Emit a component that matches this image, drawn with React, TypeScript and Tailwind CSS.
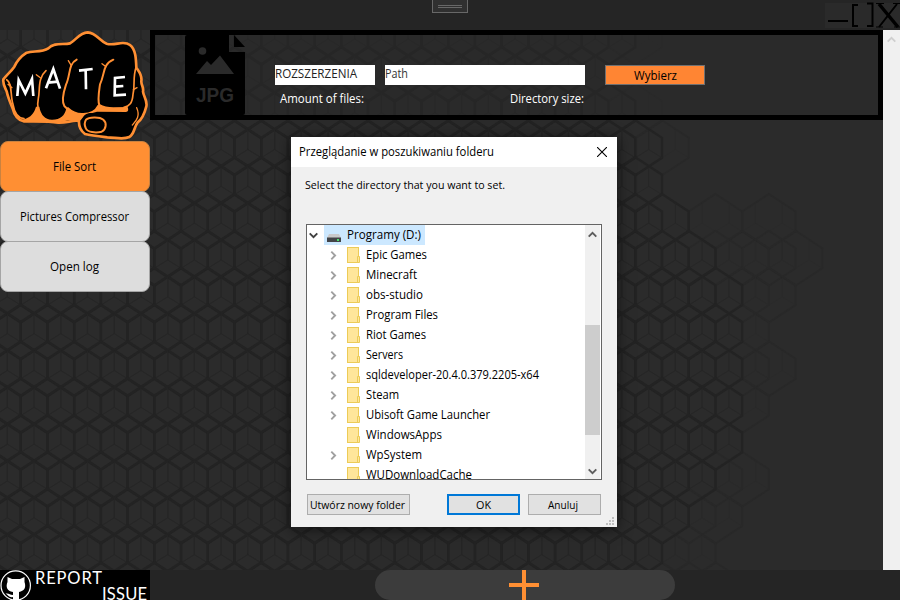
import type { ReactNode } from "react";

const CELL_W = 26.72;
const ROW_H = 36.83;
const FIRST_X = -6;
const FIRST_Y = 7.3;
// Right-hand limit of the honeycomb for each row, in pixels.
const ROW_ENDS = [662, 636, 662, 689, 662, 796, 823, 796, 769, 796, 769, 742, 769, 742, 716, 742];
// Cells from this x onwards are drawn in the lighter outline.
const FAINT_FROM = [620, 590, 620, 640, 655, 680, 700, 720, 720, 740, 740, 725, 700, 670, 650, 650];

function Honeycomb() {
  const faintCells: ReactNode[] = [];
  const cells: ReactNode[] = [];
  ROW_ENDS.forEach((end, r) => {
    const y = FIRST_Y + r * ROW_H;
    for (let x = FIRST_X; x + CELL_W <= end + 6; x += CELL_W) {
      if (r === 5 && (Math.abs(x - 743) < 8 || Math.abs(x - 689) < 8)) continue;
      const faint = x > FAINT_FROM[r];
      (faint ? faintCells : cells).push(
        <g key={r + "-" + x} transform={`translate(${x} ${y})`} stroke={faint ? "#282828" : "#232323"}>
          <path d="M0-27.5 26.7-10V10L0 27.5-26.7 10V-10Z" strokeWidth={faint ? 1.8 : 2.3} />
          <path d="M-13.4-18V1.7M13.4-18V1.7M-26.7 10-13.4 1.7 0 10 13.4 1.7 26.7 10" strokeWidth=".8" stroke={faint ? "#292929" : "#262626"} />
        </g>
      );
    }
  });
  return (
    <svg className="absolute inset-0" width="883" height="540" fill="none">
      {faintCells}
      {cells}
    </svg>
  );
}

function FistLogo() {
  return (
    <svg className="block h-[110px] w-[150px]" viewBox="0 15 450 330" strokeLinejoin="round" strokeLinecap="round">
      <path
        d="M10 163C20 150 32 141 43 125C52 105 66 92 80 83C100 77 125 83 145 70C163 51 190 60 210 55C230 44 238 23 263 22C290 24 297 47 320 56C345 64 370 44 390 60C407 73 408 100 409 128C417 140 427 150 424 168C423 180 432 187 429 200C431 215 443 228 439 244C435 260 430 280 413 292C402 306 403 329 388 336C370 345 345 337 322 337C295 334 275 332 255 327C242 317 236 303 237 288C220 284 200 294 175 293C140 288 105 290 71 289C50 283 43 270 39 253C30 232 23 215 20 199C14 186 8 177 10 163Z"
        fill="#000" stroke="#ff8f33" strokeWidth="8"
      />
      <path d="M60 284Q98 282 108 245L118 245Q125 283 155 284Q192 285 199 250L204 246Q225 266 250 264Q281 264 293 240L300 238Q315 247 340 247L383 246Q388 259 378 261L291 260 255 270 238 290 205 286 170 294Z" fill="#ff8f33" />
      <g fill="none" stroke="#ff8f33" strokeWidth="5">
        <path d="M20 164C38 175 30 210 39 238C44 268 55 279 72 281" />
        <path d="M138 137C112 160 121 193 115 220C112 232 113 245 115 256" />
        <path d="M230 104C204 117 212 151 198 179C191 200 184 228 193 243L202 252" strokeWidth="6" />
        <path d="M340 104C306 119 316 145 300 178C297 200 292 225 298 241" strokeWidth="6" />
        <path d="M409 124C397 160 406 180 399 208C397 235 388 243 372 247" />
        <path d="M109 149 121 158M205 107 214 122M306 116 318 125M411 188 400 194M410 248C422 275 407 288 397 300M24 178 36 188" strokeWidth="4" />
      </g>
      <path d="M247 283C255 258 283 263 300 270C318 276 324 299 314 317C303 329 272 328 258 318C246 310 244 294 247 283Z" fill="#000" />
      <path d="M258 284C266 276 298 274 310 284C321 293 319 313 305 320C287 325 262 322 257 309Q251 295 258 284Z" fill="#000" stroke="#ff8f33" strokeWidth="6" />
      <g fill="none" stroke="#fff" strokeWidth="8" strokeLinecap="butt" strokeLinejoin="miter">
        <path d="M52 213 56 165 76 205 96 162 100 213M138 190 160 132 180 191M144 173 174 170M237 137 278 132M257 136 258 193M375 156 345 159 344 211 378 209M345 185 370 183" />
      </g>
    </svg>
  );
}

function JpgIcon() {
  return (
    <svg className="h-20 w-[60px] shrink-0" viewBox="0 0 60 80">
      <path d="M2 0H44V17H60V78Q60 80 58 80H2Q0 80 0 78V2Q0 0 2 0Z" fill="#000" />
      <path d="M49 0V12H60Z" fill="#000" />
      <circle cx="17.5" cy="16" r="3.8" fill="#2a2a2a" />
      <path d="M11 39 22 26 26 30 35 20.5 49 39Z" fill="#2a2a2a" />
      <text x="30" y="67" textAnchor="middle" textLength="38" lengthAdjust="spacingAndGlyphs" fill="#2a2a2a" fontFamily="Liberation Sans" fontWeight="bold" fontSize="20">JPG</text>
    </svg>
  );
}

function Folder() {
  return (
    <svg className="h-4 w-[13px] shrink-0" viewBox="0 0 13 16">
      <rect x=".5" y=".5" width="11" height="15" fill="#ffe69a" stroke="#eccb57" />
      <path d="M10.5 9.5H12.5V15.5H10.5Z" fill="#ffe69a" stroke="#eccb57" />
    </svg>
  );
}

function Chevron({ className, color = "#5c5c5c" }: { className: string; color?: string }) {
  return (
    <svg className={"shrink-0 " + className} width="9" height="9" viewBox="0 0 9 9" fill="none" stroke={color} strokeWidth="1.9">
      <path d="M.7 2.3 4.5 6.1 8.3 2.3" />
    </svg>
  );
}

const folders = [
  { name: "Epic Games", open: true, w: 61 },
  { name: "Minecraft", open: true, w: 51 },
  { name: "obs-studio", open: true, w: 57 },
  { name: "Program Files", open: true, w: 72 },
  { name: "Riot Games", open: true, w: 60 },
  { name: "Servers", open: true, w: 37 },
  { name: "sqldeveloper-20.4.0.379.2205-x64", open: true, w: 173 },
  { name: "Steam", open: true, w: 33 },
  { name: "Ubisoft Game Launcher", open: true, w: 124 },
  { name: "WindowsApps", open: false, w: 76 },
  { name: "WpSystem", open: true, w: 56 },
  { name: "WUDownloadCache", open: false, w: 106 },
];

// A single line of interface text fitted to an exact advance width.
function Label({ children, w, color = "#000", size = 12 }: { children: string; w: number; color?: string; size?: number }) {
  return (
    <svg className="block h-4 shrink-0 overflow-visible" width={w} height="16">
      <text x="0" y="12.4" textLength={w} lengthAdjust="spacingAndGlyphs" fill={color} fontSize={size} fontFamily="'Open Sans', 'Noto Sans', sans-serif">{children}</text>
    </svg>
  );
}

function Dialog() {
  return (
    <div className="absolute left-[291px] top-[137px] flex h-[390px] w-[326px] flex-col bg-[#f0f0f0] shadow-[0_2px_14px_rgba(0,0,0,0.6)]">
      <div className="flex h-[30px] shrink-0 items-center justify-between bg-white pl-2 pr-[10px]">
        <Label w={195}>Przeglądanie w poszukiwaniu folderu</Label>
        <svg className="-mt-px" width="10" height="10" viewBox="0 0 10 10" stroke="#000" strokeWidth="1.1"><path d="M0 0 10 10M10 0 0 10" /></svg>
      </div>
      <div className="pl-[14px] pt-[10px]"><Label w={200} size={11.5}>Select the directory that you want to set.</Label></div>
      <div className="ml-[15px] mt-[31px] flex h-[256px] w-[296px] shrink-0 overflow-hidden border border-[#646464] bg-white">
        <div className="flex-1">
          <div className="flex h-5 items-center">
            <Chevron className="ml-[2px]" color="#404040" />
            <div className="ml-[6px] flex h-5 w-[101px] items-center bg-[#cce8ff] pl-[3px]">
              <svg className="mt-[5px]" width="14" height="8" viewBox="0 0 14 8">
                <path d="M2 0H12L14 4H0Z" fill="#c9c9cb" />
                <path d="M0 3.5H14V8H0Z" fill="#424448" />
                <path d="M10 5H12V7H10Z" fill="#4be36b" />
              </svg>
              <div className="ml-[6px]"><Label w={74}>Programy (D:)</Label></div>
            </div>
          </div>
          {folders.map((f) => (
            <div key={f.name} className="flex h-5 items-center pl-[22px]">
              {f.open ? <Chevron className="-rotate-90" color="#a0a0a0" /> : <div className="w-[9px]" />}
              <div className="ml-[9px]"><Folder /></div>
              <div className="ml-[6px]"><Label w={f.w}>{f.name}</Label></div>
            </div>
          ))}
        </div>
        <div className="mr-px flex w-[15px] flex-col items-center bg-[#f0f0f0]">
          <div className="flex h-[100px] pt-[5px]"><Chevron className="rotate-180" /></div>
          <div className="h-[110px] w-full bg-[#cdcdcd]" />
          <div className="flex flex-1 items-end pb-[3px]"><Chevron className="" /></div>
        </div>
      </div>
      <div className="mt-[14px] flex pl-4">
        <div className="flex h-[21px] w-[103px] items-center border border-[#adadad] bg-[#e1e1e1] pl-[2px]"><Label w={95} size={11.5}>Utwórz nowy folder</Label></div>
        <div className="ml-[37px] flex h-[21px] w-[73px] items-center justify-center border-2 border-[#0078d7] bg-[#e1e1e1] pr-px"><Label w={15} size={11.5}>OK</Label></div>
        <div className="ml-2 flex h-[21px] w-[73px] items-center justify-center border border-[#adadad] bg-[#e1e1e1] pr-[3px]"><Label w={30} size={11.5}>Anuluj</Label></div>
      </div>
      <svg className="absolute bottom-[2px] right-[3px]" width="8" height="8" fill="#bfbfbf">
        <path d="M6 0h2v2h-2zM3 3h2v2h-2zM6 3h2v2h-2zM0 6h2v2h-2zM3 6h2v2h-2zM6 6h2v2h-2z" />
      </svg>
    </div>
  );
}

export default function App() {
  return (
    <div className="relative flex h-[600px] w-[900px] flex-col overflow-hidden bg-[#252525] font-['Open_Sans',sans-serif]">
      <header className="flex h-[30px] shrink-0 items-start">
        <div className="ml-[432px] flex h-[13px] w-9 flex-col items-center justify-center gap-px border border-t-0 border-[#686868] bg-[#303030]">
          <div className="h-px w-6 bg-[#686868]" />
          <div className="h-px w-6 bg-[#686868]" />
        </div>
        <svg className="ml-[357px] mt-[2px]" width="75" height="26" fill="none" stroke="#000" strokeWidth="2">
          <path d="M0 1H75V26H0Z" fill="#2a2a2a" stroke="none" />
          <path d="M3 19H23M33 3H28V24H33M42 1.5H47.5V24H42M72 2 54 25" />
          <path d="M54 2 73 25" strokeWidth="3.4" />
          <path d="M51 1.5H59M68 1.5H75M51 25H58M69 25H75" strokeWidth="1" />
        </svg>
      </header>
      <main className="relative flex h-[540px] shrink-0 bg-[#2b2b2b]">
        <Honeycomb />
        <aside className="relative flex w-[150px] flex-col">
          <FistLogo />
          <div className="mt-px flex flex-col">
            <div className="flex h-[51px] items-center justify-center rounded-[8px] border border-[#c98240] bg-[#ff8f33] pr-px"><Label w={43}>File Sort</Label></div>
            <div className="-mt-px flex h-[51px] items-center justify-center rounded-[8px] border border-[#a5a5a5] bg-[#ddd] pr-px"><Label w={109}>Pictures Compressor</Label></div>
            <div className="-mt-px flex h-[51px] items-center justify-center rounded-[8px] border border-[#a5a5a5] bg-[#ddd] pr-px"><Label w={49}>Open log</Label></div>
          </div>
        </aside>
        <section className="relative flex h-[90px] w-[733px] border-[5px] border-black bg-[#292929]/50 pl-[30px]">
          <JpgIcon />
          <div className="ml-[30px] flex flex-col pt-[30px]">
            <div className="flex">
              <div className="h-5 w-[100px] bg-white pt-px"><Label w={82} color="#222">ROZSZERZENIA</Label></div>
              <div className="ml-[10px] h-5 w-[200px] bg-white pt-px"><Label w={23} color="#333">Path</Label></div>
              <div className="ml-5 flex h-5 w-[100px] items-center justify-center border border-[#707070] bg-[#ff8533] pt-[2px]"><Label w={43}>Wybierz</Label></div>
            </div>
            <div className="mt-[6px] flex pl-[5px]">
              <Label w={84} color="#fff">Amount of files:</Label>
              <div className="ml-[146px]"><Label w={74} color="#fff">Directory size:</Label></div>
            </div>
          </div>
        </section>
        <div className="relative flex w-[17px] justify-center bg-[#f0f0f0] pt-[5px]">
          <Chevron className="rotate-180" color="#cfcfcf" />
        </div>
      </main>
      <footer className="flex h-[30px] shrink-0">
        <div className="flex h-[30px] w-[150px] bg-black">
          <svg className="overflow-visible" width="150" height="30">
            <circle cx="15.7" cy="15.5" r="14.7" fill="none" stroke="#fff" strokeWidth="1.2" />
            <path d="M7.5 7 12 9H20L24.5 7V12C26.5 18 24 21 19 22V30H13V27C9 28 8 25 5.5 23.5C9.5 23 9.5 25 13 25V22C7 21 5.5 17 7.5 12Z" fill="#fff" />
            <g fill="#fff" fontFamily="Lato, sans-serif" fontSize="16.5">
              <text x="35" y="14" textLength="67" lengthAdjust="spacing">REPORT</text>
              <text x="102" y="29.5" textLength="45" lengthAdjust="spacing">ISSUE</text>
            </g>
          </svg>
        </div>
        <div className="ml-[225px] flex h-[30px] w-[300px] justify-center rounded-full bg-[#3c3c3c]">
          <svg width="30" height="30" className="-ml-[2px]"><path d="M13 0H17V30H13ZM0 13H30V17H0Z" fill="#ff8f33" /></svg>
        </div>
      </footer>
      <Dialog />
    </div>
  );
}
